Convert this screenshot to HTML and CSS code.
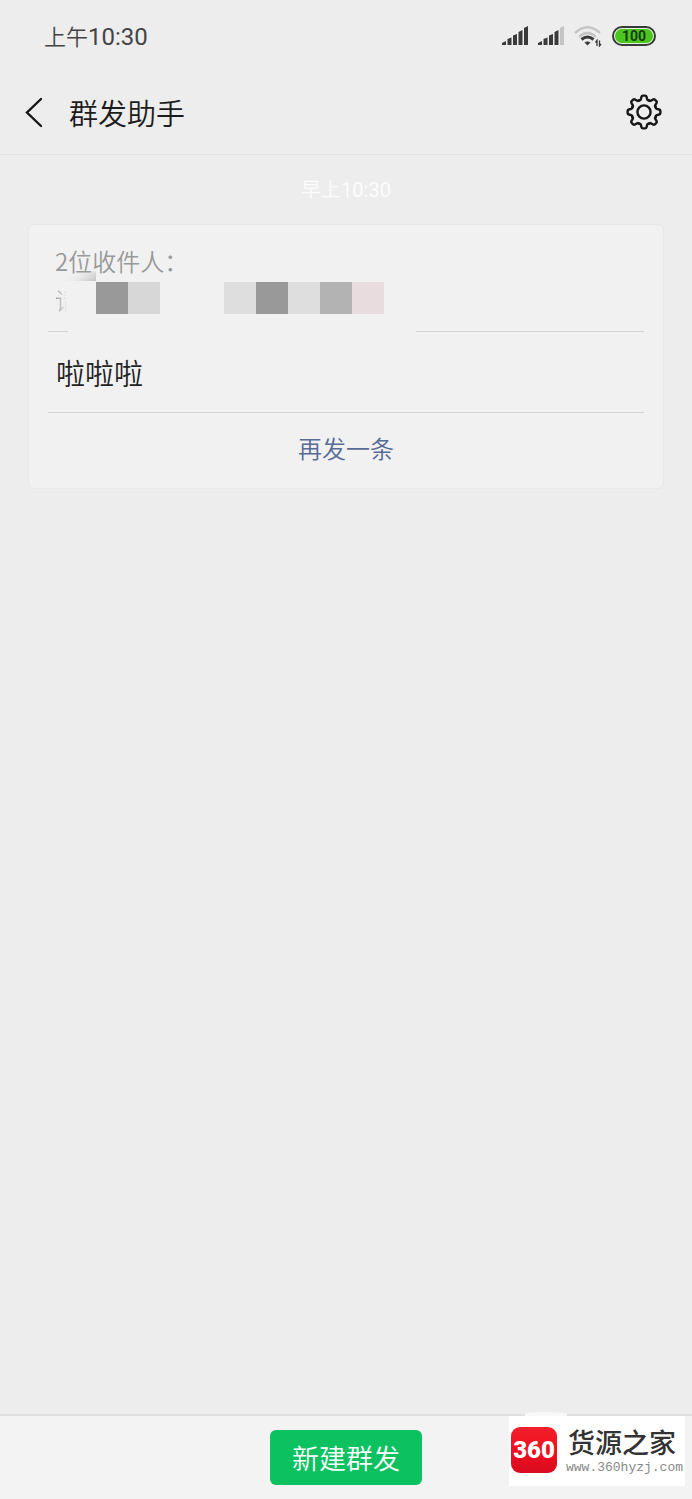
FILE: index.html
```html
<!DOCTYPE html>
<html lang="zh-CN">
<head>
<meta charset="utf-8">
<meta name="viewport" content="width=device-width, initial-scale=1">
<title>群发助手</title>
<link rel="stylesheet" href="styles.css">
</head>
<body>
<div class="screen">
  <div class="status">
    <div class="status-time">上午<span class="digits">10:30</span></div>
    <div class="status-icons">
      <svg class="signal" width="26" height="20" viewBox="0 0 26 20" fill="#3a3a3a" aria-hidden="true">
        <path d="M0 19v-2l4-2v4zM5.500 13l4-1.500v7.500h-4zM11 9.500l4-1.500v11h-4zM16.500 6l4-2v15h-4zM22 2l4-2v19h-4z"/>
      </svg>
      <svg class="signal" width="26" height="20" viewBox="0 0 26 20" fill="#3a3a3a" aria-hidden="true">
        <path d="M0 19v-2l4-2v4zM5.500 13l4-1.500v7.500h-4zM11 9.500l4-1.500v11h-4zM16.500 6l4-2v15h-4z"/>
        <path fill="#c4c4c4" d="M22 2l4-2v19h-4z"/>
      </svg>
      <svg class="wifi" width="28" height="22" viewBox="0 0 28 22" fill="none" aria-hidden="true">
        <path d="M1 8Q13.500-3.500 26 8M5 12Q13.500 4 22 12" stroke="#c4c4c4" stroke-width="2.400"/>
        <path d="M7.500 14.500Q13.500 9.500 19.500 14.500" stroke="#3a3a3a" stroke-width="3"/>
        <path d="M10.500 17.500Q13.500 15.500 16.500 17.500L13.500 20.500z" fill="#3a3a3a"/>
        <path d="M23 21v-5.500l-1.500 2M25.500 15.500v5.500l1.500-2" stroke="#3a3a3a" stroke-width="1.300"/>
      </svg>
      <div class="battery"><span class="battery-level">100</span></div>
    </div>
  </div>

  <header class="header">
    <button class="icon-button" aria-label="返回">
      <svg width="20" height="32" viewBox="0 0 20 32" fill="none" stroke="#161616" stroke-width="2.400" stroke-linecap="round"><path d="M17 3L3 16.500L17 30"/></svg>
    </button>
    <h1 class="title">群发助手</h1>
    <button class="icon-button" aria-label="设置">
      <svg width="36" height="36" viewBox="-18 -18 36 36" fill="none" stroke="#161616" stroke-width="2.400" stroke-linecap="round">
        <defs><path id="tooth" d="M-4.900-11.800Q-3.700-11.300-3.100-12.900L-2.500-15.200Q-2.200-16.400-1.100-16.400H1.100Q2.200-16.400 2.500-15.200L3.100-12.900Q3.700-11.300 4.900-11.800"/></defs>
        <use href="#tooth"/><use href="#tooth" transform="rotate(45)"/><use href="#tooth" transform="rotate(90)"/><use href="#tooth" transform="rotate(135)"/>
        <use href="#tooth" transform="rotate(180)"/><use href="#tooth" transform="rotate(225)"/><use href="#tooth" transform="rotate(270)"/><use href="#tooth" transform="rotate(315)"/>
        <circle r="6.600"/>
      </svg>
    </button>
  </header>

  <main class="messages">
    <time class="stamp">早上<span class="digits">10:30</span></time>
    <article class="card">
      <div class="recipients">
        <div class="recipients-label">2位收件人：<span class="smudge"></span></div>
        <div class="names">
          <span class="name-start">请</span>
          <div class="mosaic">
            <span class="tile gray"></span><span class="tile light"></span><span class="tile"></span><span class="tile"></span><span class="tile pale"></span><span class="tile gray"></span><span class="tile pale"></span><span class="tile mid"></span><span class="tile pink"></span>
          </div>
        </div>
      </div>
      <p class="message">啦啦啦</p>
      <button class="again">再发一条</button>
    </article>
  </main>

  <footer class="footer">
    <button class="create">新建群发</button>
    <div class="brand">
      <div class="brand-logo">360</div>
      <div class="brand-text">
        <div class="brand-name">货源之家</div>
        <div class="brand-url">www.360hyzj.com</div>
      </div>
    </div>
  </footer>
</div>
</body>
</html>
```
FILE: styles.css
```css
* {
  box-sizing: border-box;
}

body {
  margin: 0;
  background: #ededed;
  color: #222;
  font-family: "Noto Sans CJK SC", sans-serif;
  font-weight: 350;
}

button {
  padding: 0;
  border: 0;
  background: none;
  font: inherit;
  cursor: pointer;
}

svg {
  display: block;
}

.screen {
  display: flex;
  flex-direction: column;
  min-height: 100vh;
}

.status {
  display: flex;
  align-items: center;
  justify-content: space-between;
  height: 72px;
  padding: 0 36px 0 44px;
}

.status-time {
  color: #444;
  font-size: 22px;
  line-height: 32px;
}

.digits {
  font-family: Roboto, sans-serif;
  font-weight: 400;
}

.status-time .digits {
  font-size: 24px;
}

.status-icons {
  display: flex;
  align-items: center;
  gap: 10px;
}

.battery {
  display: flex;
  width: 44px;
  height: 20px;
  padding: 1px;
  border: 2px solid #3a3a3a;
  border-radius: 10px;
  background: #dff5d5;
}

.battery-level {
  flex: 1;
  border-radius: 8px;
  background: #4bc61f;
  color: #173c0b;
  font-family: Roboto, sans-serif;
  font-size: 14px;
  font-weight: 700;
  line-height: 14px;
  text-align: center;
}

.header {
  display: flex;
  align-items: center;
  height: 83px;
  padding: 0 30px 2px 24px;
  border-bottom: 1px solid #e4e4e4;
}

.title {
  flex: 1;
  margin: 0 0 0 25px;
  color: #1c1c1c;
  font-size: 29px;
  font-weight: 350;
  line-height: 40px;
}

.messages {
  display: flex;
  flex: 1;
  flex-direction: column;
  align-items: center;
  padding: 20px 28px;
}

.stamp {
  height: 28px;
  color: #fcfcfc;
  font-size: 20px;
  line-height: 28px;
}

.card {
  width: 100%;
  margin-top: 21px;
  padding: 0 19px;
  border: 1px solid #e8e8e8;
  border-radius: 6px;
  background: #f1f1f1;
}

.recipients {
  height: 107px;
  padding: 18px 7px 0;
  background:
    linear-gradient(#d2d2d2, #d2d2d2) left bottom / 20px 1px no-repeat,
    linear-gradient(#d2d2d2, #d2d2d2) right bottom / calc(100% - 368px) 1px no-repeat;
}

.recipients-label {
  position: relative;
  color: #999;
  font-size: 24px;
  line-height: 36px;
}

.smudge {
  position: absolute;
  top: 28px;
  left: 8px;
  width: 33px;
  height: 10px;
  background: linear-gradient(160deg, #f1f1f100 30%, #c2c2c2 100%);
  mask-image: linear-gradient(90deg, transparent, #000);
}

.names {
  display: flex;
  height: 35px;
  padding-top: 3px;
}

.name-start {
  width: 12px;
  overflow: hidden;
  color: #999;
  font-size: 24px;
  line-height: 36px;
  mask-image: linear-gradient(90deg, #000, transparent);
}

.mosaic {
  display: flex;
  margin-left: 29px;
}

.tile {
  width: 32px;
  height: 32px;
}

.gray {
  background: #999;
}

.light {
  background: #d7d7d7;
}

.pale {
  background: #dedede;
}

.mid {
  background: #b3b3b3;
}

.pink {
  background: #e8dcde;
}

.message {
  margin: 0;
  padding: 20px 8px;
  border-bottom: 1px solid #d2d2d2;
  color: #222;
  font-size: 29px;
  line-height: 40px;
}

.again {
  display: block;
  width: 100%;
  height: 75px;
  padding-bottom: 6px;
  color: #576b95;
  font-size: 24px;
}

.footer {
  position: relative;
  display: flex;
  justify-content: center;
  padding: 14px 0;
  border-top: 2px solid #e1e1e1;
  background: #f3f3f3;
}

.create {
  height: 55px;
  padding: 0 22px;
  border-radius: 6px;
  background: #0bc160;
  color: #fff;
  font-size: 27px;
}

.brand {
  position: absolute;
  top: 0;
  right: 7px;
  display: flex;
  align-items: center;
  gap: 9px;
  width: 176px;
  height: 70px;
  padding: 0 0 2px 2px;
  background: #fff;
}

.brand::before {
  position: absolute;
  bottom: 100%;
  left: 16px;
  width: 42px;
  height: 4px;
  border-radius: 50% 50% 0 0;
  background: #f8f8f8;
  content: "";
}

.brand-logo {
  width: 46px;
  height: 46px;
  border-radius: 9px;
  background: linear-gradient(#f2202c, #f01020 50%, #d80c20);
  color: #fff;
  font-family: Roboto, sans-serif;
  font-size: 24px;
  font-weight: 900;
  line-height: 46px;
  text-align: center;
}

.brand-name {
  padding-left: 2px;
  color: #333;
  font-size: 27px;
  font-weight: 500;
  line-height: 36px;
}

.brand-url {
  color: #888;
  font-family: "Liberation Mono", monospace;
  font-size: 13px;
  font-weight: 400;
  line-height: 16px;
}
```
